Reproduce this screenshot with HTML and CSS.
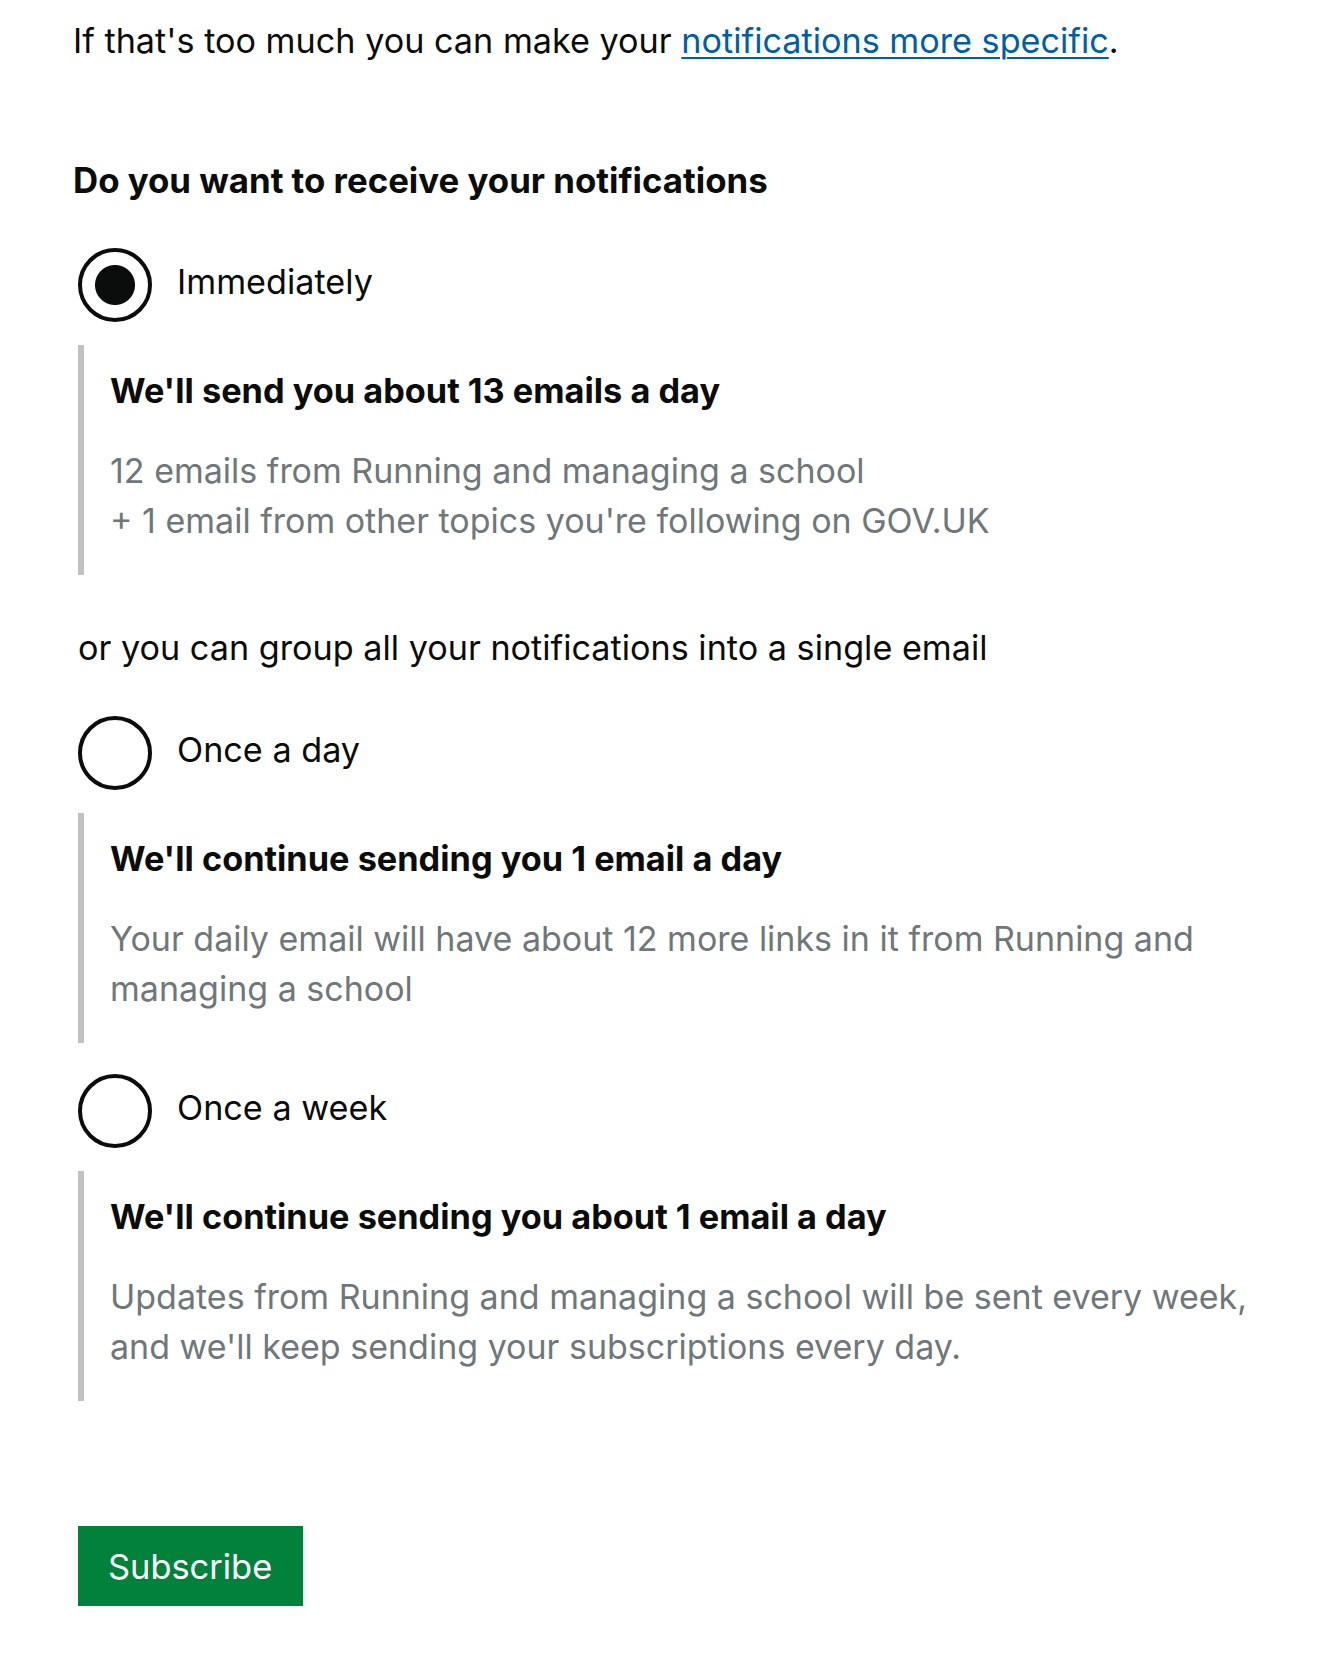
FILE: index.html
```html
<!DOCTYPE html>
<html lang="en">
<head>
<meta charset="utf-8">
<title>Notification frequency</title>
<link rel="stylesheet" href="styles.css">
</head>
<body>
<main class="page">
  <p class="intro">If that's too much you can make your <a class="link" href="#">notifications more specific</a>.</p>

  <form class="form">
    <fieldset class="fieldset">
      <legend class="legend">Do you want to receive your notifications</legend>

      <div class="radios">
        <label class="radio">
          <input class="radio__input" type="radio" name="frequency" value="immediately" checked>
          <span class="radio__label">Immediately</span>
        </label>
        <div class="reveal">
          <p class="reveal__title">We'll send you about 13 emails a day</p>
          <p class="reveal__hint">12 emails from Running and managing a school<br>+ 1 email from other topics you're following on GOV.UK</p>
        </div>

        <p class="divider">or you can group all your notifications into a single email</p>

        <label class="radio radio--after-divider">
          <input class="radio__input" type="radio" name="frequency" value="daily">
          <span class="radio__label">Once a day</span>
        </label>
        <div class="reveal">
          <p class="reveal__title">We'll continue sending you 1 email a day</p>
          <p class="reveal__hint">Your daily email will have about 12 more links in it from Running and managing a school</p>
        </div>

        <label class="radio radio--after-reveal">
          <input class="radio__input" type="radio" name="frequency" value="weekly">
          <span class="radio__label">Once a week</span>
        </label>
        <div class="reveal">
          <p class="reveal__title">We'll continue sending you about 1 email a day</p>
          <p class="reveal__hint">Updates from Running and managing a school will be sent every week, and we'll keep sending your subscriptions every day.</p>
        </div>
      </div>
    </fieldset>

    <button class="button" type="submit">Subscribe</button>
  </form>
</main>
</body>
</html>
```
FILE: styles.css
```css
* { box-sizing: border-box; }

html, body {
  margin: 0;
  padding: 0;
  background: #ffffff;
}

body {
  font-family: "Inter", "Liberation Sans", sans-serif;
  font-size: 34.2px;
  line-height: 50px;
  color: #0b0c0c;
}

.page {
  width: 100%;
  padding: 16px 60px 0 73px;
}

p { margin: 0; }

.link {
  color: #005ea5;
  text-decoration: underline;
  text-decoration-thickness: 2px;
  text-underline-offset: 4px;
}

.form { margin: 0; }

.fieldset {
  border: 0;
  margin: 89px 0 0 0;
  padding: 0;
  min-width: 0;
}

.legend {
  padding: 0;
  font-weight: 700;
  font-size: 34.8px;
  line-height: 50px;
}

.radios {
  margin-left: 5px;
  padding-top: 43px;
}

.radio {
  display: flex;
  align-items: center;
  gap: 25px;
  cursor: pointer;
}

.radio--after-divider { margin-top: 43px; }
.radio--after-reveal { margin-top: 31px; }

.radio__input {
  -webkit-appearance: none;
  appearance: none;
  flex: none;
  width: 74px;
  height: 74px;
  margin: 0;
  border: 4px solid #0b0c0c;
  border-radius: 50%;
  background: #ffffff;
}

.radio__input:checked {
  background: radial-gradient(circle at center, #0b0c0c 0, #0b0c0c 19.5px, #ffffff 20.5px);
}

.radio__label {
  line-height: 50px;
  margin-bottom: 6px;
}

.reveal {
  margin-top: 23px;
  border-left: 6px solid #bfc1c3;
  padding: 21px 0 29px 26px;
}

.reveal__title {
  font-weight: 700;
  font-size: 34.3px;
  line-height: 50px;
}

.reveal__hint {
  margin-top: 30px;
  color: #6f777b;
  font-size: 34px;
  line-height: 50px;
}

.divider {
  margin-top: 48px;
}

.button {
  display: block;
  margin: 125px 0 0 5px;
  height: 80px;
  padding: 2px 31px 0 30px;
  border: 0;
  border-radius: 0;
  background: #00823b;
  box-shadow: 0 4px 0 #003618;
  color: #ffffff;
  font-family: "Inter", "Liberation Sans", sans-serif;
  font-size: 34.4px;
  line-height: 50px;
  cursor: pointer;
}
```
